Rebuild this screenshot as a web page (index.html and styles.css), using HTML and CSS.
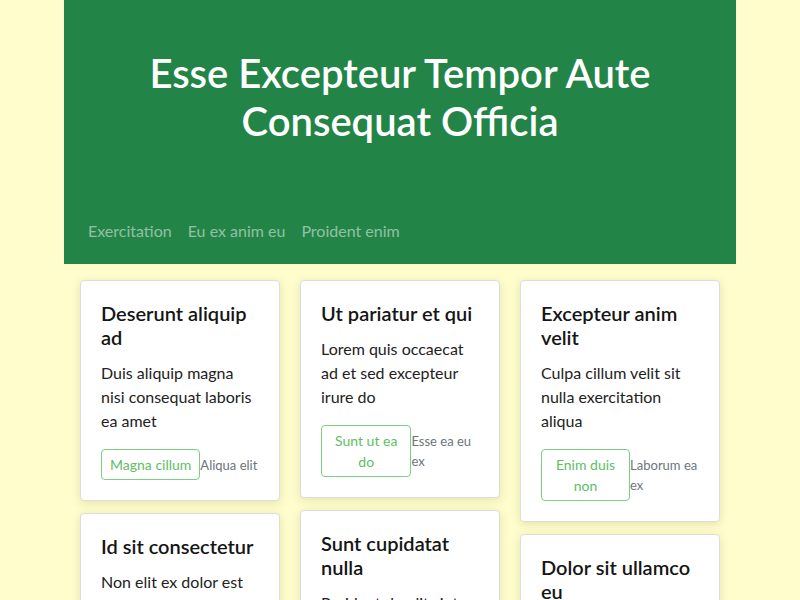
FILE: index.html
```html
<!DOCTYPE html>
<html lang="la">
<head>
<meta charset="utf-8">
<title>Esse Excepteur Tempor Aute Consequat Officia</title>
<link rel="stylesheet" href="styles.css">
</head>
<body>
<div class="page">
  <header class="hero">
    <h1 class="hero-title">Esse Excepteur Tempor Aute Consequat Officia</h1>
    <nav class="hero-nav">
      <a class="nav-link" href="#">Exercitation</a>
      <a class="nav-link" href="#">Eu ex anim eu</a>
      <a class="nav-link" href="#">Proident enim</a>
    </nav>
  </header>
  <main class="grid">
    <div class="col">
      <article class="card">
        <h2 class="card-title">Deserunt aliquip ad</h2>
        <p class="card-text">Duis aliquip magna nisi consequat laboris ea amet</p>
        <div class="card-actions">
          <button class="btn">Magna cillum</button>
          <span class="meta">Aliqua elit</span>
        </div>
      </article>
      <article class="card">
        <h2 class="card-title">Id sit consectetur</h2>
        <p class="card-text">Non elit ex dolor est velit aute nostrud</p>
        <div class="card-actions">
          <button class="btn">Amet irure</button>
          <span class="meta">Velit sint</span>
        </div>
      </article>
    </div>
    <div class="col">
      <article class="card">
        <h2 class="card-title">Ut pariatur et qui</h2>
        <p class="card-text">Lorem quis occaecat ad et sed excepteur irure do</p>
        <div class="card-actions">
          <button class="btn">Sunt ut ea do</button>
          <span class="meta">Esse ea eu ex</span>
        </div>
      </article>
      <article class="card">
        <h2 class="card-title">Sunt cupidatat nulla</h2>
        <p class="card-text">Proident do elit sint commodo labore</p>
        <div class="card-actions">
          <button class="btn">Culpa esse</button>
          <span class="meta">Ad minim</span>
        </div>
      </article>
    </div>
    <div class="col">
      <article class="card">
        <h2 class="card-title">Excepteur anim velit</h2>
        <p class="card-text">Culpa cillum velit sit nulla exercitation aliqua</p>
        <div class="card-actions">
          <button class="btn">Enim duis non</button>
          <span class="meta">Laborum ea ex</span>
        </div>
      </article>
      <article class="card">
        <h2 class="card-title">Dolor sit ullamco eu</h2>
        <p class="card-text">Irure mollit anim sunt officia tempor</p>
        <div class="card-actions">
          <button class="btn">Nisi ipsum</button>
          <span class="meta">Qui enim</span>
        </div>
      </article>
    </div>
  </main>
</div>
</body>
</html>
```
FILE: styles.css
```css
* { box-sizing: border-box; }

body {
  margin: 0;
  background: #fffdcc;
  font-family: "Lato", "Open Sans", sans-serif;
  color: #1c1c1c;
}

.page {
  width: 672px;
  margin: 0 auto;
}

.hero {
  background: #238447;
  height: 264px;
  display: flex;
  flex-direction: column;
  padding: 0 24px 21px;
}

.hero-title {
  margin: 0;
  padding-top: 49px;
  font-size: 40px;
  line-height: 48px;
  font-weight: 600;
  color: #ffffff;
  text-align: center;
}

.hero-nav {
  margin-top: auto;
  display: flex;
  gap: 16px;
}

.nav-link {
  font-size: 16px;
  line-height: 24px;
  color: rgba(255, 255, 255, 0.5);
  text-decoration: none;
}

.grid {
  display: flex;
  gap: 20px;
  padding: 16px;
  align-items: flex-start;
}

.col {
  flex: 1 1 0;
  min-width: 0;
  display: flex;
  flex-direction: column;
  gap: 12px;
}

.card {
  background: #ffffff;
  border: 1px solid #dcdcdc;
  border-radius: 4px;
  padding: 20px;
  box-shadow: 0 2px 10px rgba(90, 90, 0, 0.16);
}

.card-title {
  margin: 0 0 12px;
  font-size: 20px;
  line-height: 24px;
  font-weight: 600;
  color: #151515;
}

.card-text {
  margin: 0 0 16px;
  font-size: 16px;
  line-height: 24px;
  color: #222222;
}

.card-actions {
  display: flex;
  align-items: center;
}

.btn {
  font-family: inherit;
  font-size: 14px;
  line-height: 21px;
  padding: 4px 8px;
  background: #ffffff;
  color: #5cc063;
  border: 1px solid #7ccf80;
  border-radius: 4px;
  text-align: center;
  cursor: pointer;
}

.meta {
  font-size: 13px;
  line-height: 20px;
  color: #6c757d;
}
```
